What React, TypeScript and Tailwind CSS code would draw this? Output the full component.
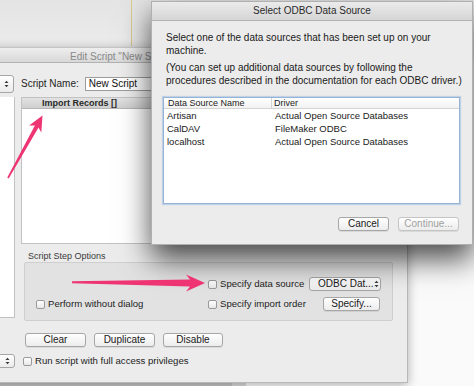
import React from 'react';

function Updown() {
  return (
    <svg width="5" height="8" viewBox="0 0 5 8" className="shrink-0">
      <path d="M0.5 3 L2.5 0.8 L4.5 3 Z M0.5 5 L2.5 7.2 L4.5 5 Z" fill="#3a3a3a" />
    </svg>
  );
}

function Btn({ label, w, disabled }: { label: string; w: string; disabled?: boolean }) {
  return (
    <div
      className={`${w} h-[14px] flex items-center justify-center rounded-[3px] border border-[#a6a6a6] bg-gradient-to-b from-white to-[#ececec] shadow-[0_1px_0_rgba(0,0,0,0.08)] text-[10px] leading-none ${
        disabled ? 'text-[#a0a0a0] border-[#c4c4c4]' : 'text-[#1a1a1a]'
      }`}
    >
      {label}
    </div>
  );
}

function Check({ label, className }: { label: string; className?: string }) {
  return (
    <div className={`flex items-center gap-[3px] ${className ?? ''}`}>
      <div className="w-[9px] h-[9px] rounded-[2px] border border-[#9a9a9a] bg-gradient-to-b from-white to-[#e8e8e8] shrink-0" />
      <span className="text-[9.6px] leading-none text-[#1e1e1e] whitespace-nowrap">{label}</span>
    </div>
  );
}

function Arrows() {
  return (
    <svg className="absolute left-0 top-0 pointer-events-none" width="474" height="386">
      <path
        d="M7.3 177.6 L34.9 125.4 L29.1 125.6 L42.5 115.5 L41.3 132.4 L38.5 127.4 L8.7 178.4 Z"
        fill="#ee3472"
      />
      <path
        d="M72 281.2 L190 279.6 L186 274.6 L205 283 L186 291.4 L190 286.4 L72 283.2 Z"
        fill="#ee3472"
      />
    </svg>
  );
}

export default function App() {
  return (
    <div className="relative w-[474px] h-[386px] overflow-hidden bg-[#fafafa] font-['Liberation_Sans',Arial,sans-serif]">
      {/* desktop behind */}
      <div className="absolute left-0 top-0 w-[474px] h-[60px] bg-gradient-to-b from-[#e4e4e4] to-[#eeeeee]">
        <div className="ml-[131px] w-px h-[46px] bg-[#dccb8c]" />
      </div>
      <div className="absolute left-0 top-[382px] w-[232px] h-[4px] bg-[#c3c3c3]" />
      <div className="absolute left-[232px] top-[382px] w-[14px] h-[4px] bg-[#d8d8d8]" />

      {/* Edit Script window */}
      <div className="absolute left-[-40px] top-[47px] w-[448px] h-[336px] bg-[#ececec] border-r border-b border-[#b8b8b8] shadow-[0_2px_10px_rgba(0,0,0,0.3)] flex flex-col">
        <div className="h-[16px] shrink-0 border-t border-[#c4c4c4] border-b border-b-[#b2b2b2] bg-gradient-to-b from-[#eeeeee] to-[#d8d8d8] flex items-center pl-[110px]">
          <div className="w-[81px] overflow-hidden">
            <span className="text-[10px] leading-none text-[#8a8a8a] whitespace-nowrap">Edit Script "New Sc</span>
          </div>
        </div>

        <div className="mt-[12px] h-[18px] flex items-center">
          <div className="w-[54px] h-[18px] rounded-[3px] border border-[#a6a6a6] bg-gradient-to-b from-white to-[#ebebeb] flex items-center justify-end pr-[4px]">
            <Updown />
          </div>
          <span className="ml-[7px] text-[10px] leading-none text-[#1e1e1e] whitespace-nowrap">Script Name:</span>
          <div className="ml-[6px] w-[200px] h-[14px] border border-[#9c9c9c] bg-white flex items-center pl-[3px] text-[10px] leading-none text-[#111]">
            New Script
          </div>
        </div>

        <div className="mt-[4px] flex">
          <div className="w-[55px] h-[221px] bg-white border-r border-b border-[#c2c2c2]" />
          <div className="ml-[6px] w-[372px] flex flex-col">
            <div className="h-[147px] bg-white border border-[#c2c2c2] flex flex-col">
              <div className="h-[11px] bg-gradient-to-b from-[#e2e2e2] to-[#cfcfcf] border-b border-[#b5b5b5] flex items-center pl-[20px]">
                <span className="text-[9px] leading-none font-semibold text-[#2a2a2a] whitespace-nowrap">Import Records []</span>
              </div>
            </div>
            <div className="mt-[7px] ml-[7px] h-[11px] text-[9px] leading-[11px] text-[#3a3a3a] whitespace-nowrap">Script Step Options</div>
            <div className="ml-[3px] w-[369px] h-[59px] bg-[#e2e2e2] border border-[#cfcfcf] rounded-[2px] flex flex-col pt-[14px] gap-[6px]">
              <div className="h-[14px] flex items-center">
                <Check label="Specify data source" className="ml-[183px] w-[101px]" />
                <div className="w-[72px] h-[14px] rounded-[3px] border border-[#a6a6a6] bg-gradient-to-b from-white to-[#ebebeb] flex items-center justify-between pl-[8px] pr-[4px]">
                  <span className="text-[10px] leading-none text-[#1a1a1a] whitespace-nowrap">ODBC Dat...</span>
                  <Updown />
                </div>
              </div>
              <div className="h-[14px] flex items-center">
                <Check label="Perform without dialog" className="ml-[11px] w-[172px]" />
                <Check label="Specify import order" className="w-[115px]" />
                <Btn label="Specify..." w="w-[57px]" />
              </div>
            </div>
            <div className="mt-[12px] ml-[4px] flex gap-[8px]">
              <Btn label="Clear" w="w-[61px]" />
              <Btn label="Duplicate" w="w-[61px]" />
              <Btn label="Disable" w="w-[60px]" />
            </div>
          </div>
        </div>

        <div className="mt-[7px] h-[14px] flex items-center">
          <div className="w-[55px] h-[14px] rounded-[3px] border border-[#a6a6a6] bg-gradient-to-b from-white to-[#ebebeb] flex items-center justify-end pr-[4px]">
            <Updown />
          </div>
          <Check label="Run script with full access privileges" className="ml-[8px]" />
        </div>
      </div>

      {/* ODBC dialog */}
      <div className="absolute left-[151px] top-[1px] w-[322px] h-[244px] bg-[#ececec] border border-[#b0b0b0] shadow-[0_14px_28px_rgba(0,0,0,0.7)] flex flex-col">
        <div className="h-[19px] shrink-0 bg-gradient-to-b from-[#ebebeb] to-[#d5d5d5] border-b border-[#b3b3b3] flex items-center justify-center">
          <span className="text-[10px] leading-none text-[#2a2a2a] whitespace-nowrap">Select ODBC Data Source</span>
        </div>
        <div className="pt-[10px] pl-[14px] text-[10px] leading-[13px] text-[#1a1a1a] whitespace-nowrap">
          <p>Select one of the data sources that has been set up on your<br />machine.</p>
          <p className="mt-[4px]">(You can set up additional data sources by following the<br />procedures described in the documentation for each ODBC driver.)</p>
        </div>
        <div className="mt-[10px] ml-[11px] w-[297px] h-[107px] bg-white border border-[#93b3d8] shadow-[0_0_1px_1px_rgba(120,160,215,0.35)] flex flex-col">
          <div className="h-[11px] flex border-b border-[#d4d4d4] bg-gradient-to-b from-white to-[#f2f2f2] text-[9px] leading-[11px] text-[#222]">
            <div className="w-[108px] pl-[4px] border-r border-[#d4d4d4]">Data Source Name</div>
            <div className="pl-[2px]">Driver</div>
          </div>
          {[
            ['Artisan', 'Actual Open Source Databases'],
            ['CalDAV', 'FileMaker ODBC'],
            ['localhost', 'Actual Open Source Databases'],
          ].map(([n, d]) => (
            <div key={n} className="h-[13px] flex text-[9.5px] leading-[13px] text-[#1a1a1a]">
              <div className="w-[109px] pl-[3px]">{n}</div>
              <div className="pl-[2px]">{d}</div>
            </div>
          ))}
        </div>
        <div className="mt-[13px] flex justify-end gap-[9px] pr-[13px]">
          <Btn label="Cancel" w="w-[51px]" />
          <Btn label="Continue..." w="w-[61px]" disabled />
        </div>
      </div>

      <Arrows />
    </div>
  );
}
